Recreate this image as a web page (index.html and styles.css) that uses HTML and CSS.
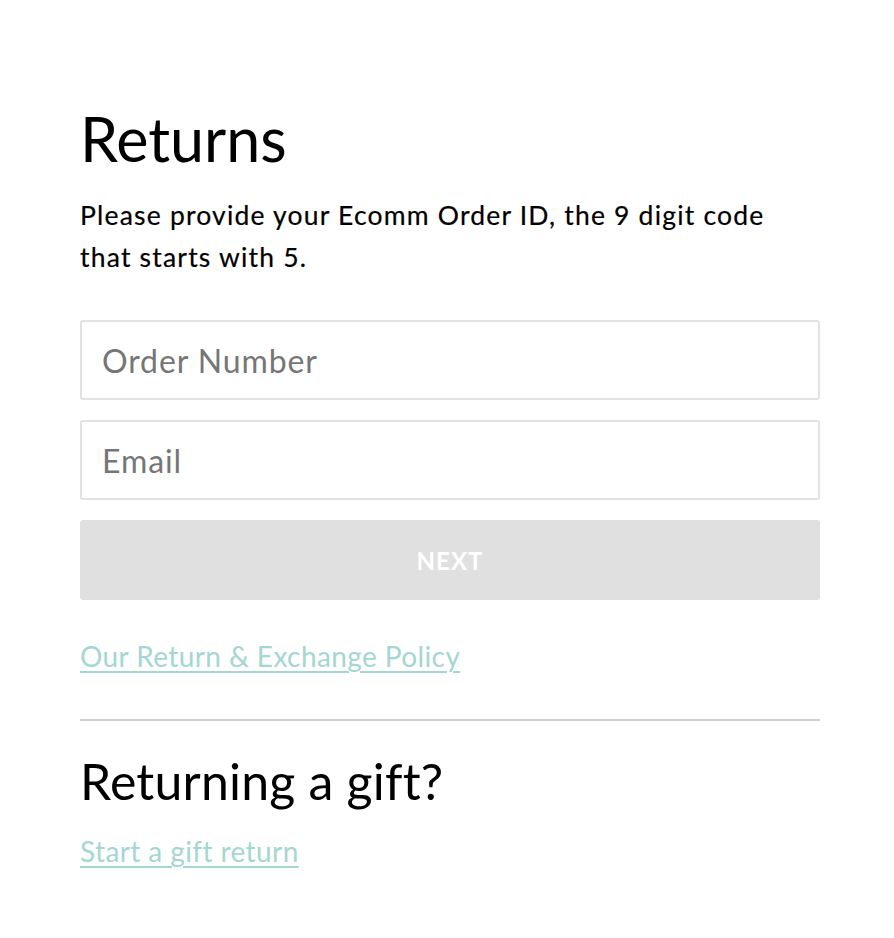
FILE: index.html
```html
<!DOCTYPE html>
<html lang="en">
<head>
<meta charset="utf-8">
<title>Returns</title>
<link rel="stylesheet" href="styles.css">
</head>
<body>
<main class="page">
  <h1 class="title">Returns</h1>
  <p class="intro">Please provide your Ecomm Order ID, the 9 digit code that starts with 5.</p>
  <form class="form">
    <input class="field" type="text" placeholder="Order Number">
    <input class="field" type="email" placeholder="Email">
    <button class="btn" type="button" disabled>NEXT</button>
  </form>
  <a class="link policy" href="#">Our Return &amp; Exchange Policy</a>
  <hr class="divider">
  <h2 class="subtitle">Returning a gift?</h2>
  <a class="link gift" href="#">Start a gift return</a>
</main>
</body>
</html>
```
FILE: styles.css
```css
* { box-sizing: border-box; }
html, body { margin: 0; padding: 0; background: #fff; }
body { font-family: "Lato", "Open Sans", sans-serif; color: #000; }
.page { width: 740px; margin: 0 0 0 80px; padding-top: 99px; display: flex; flex-direction: column; align-items: flex-start; }
.title { font-size: 61px; font-weight: 400; margin: 0; line-height: 80px; }
.intro { font-size: 26.5px; line-height: 42px; letter-spacing: 1.2px; margin: 15px 0 0; width: 730px; -webkit-text-stroke: 0.2px #000; }
.form { width: 100%; display: flex; flex-direction: column; gap: 20px; margin-top: 42px; }
.field { width: 100%; height: 80px; border: 2px solid #e2e2e2; border-radius: 3px; padding: 0 20px; font: 32px "Lato", sans-serif; letter-spacing: 0.9px; color: #333; outline: none; background: #fff; }
.field::placeholder { color: #767676; }
.btn { width: 100%; height: 80px; border: 0; border-radius: 3px; background: #e0e0e0; color: #fff; font: 700 24px "Lato", sans-serif; letter-spacing: 1px; padding: 0; }
.link { color: #a4d6d2; font-size: 28px; line-height: 36px; letter-spacing: 0.4px; text-decoration: underline; text-decoration-thickness: 2px; text-underline-offset: 4px; }
.policy { margin-top: 38px; }
.divider { width: 100%; border: 0; border-top: 2px solid #d0d0d0; margin: 45px 0 0; }
.subtitle { font-size: 50px; font-weight: 400; margin: 30px 0 0; line-height: 60px; letter-spacing: 0.2px; }
.gift { margin-top: 22px; }
```
